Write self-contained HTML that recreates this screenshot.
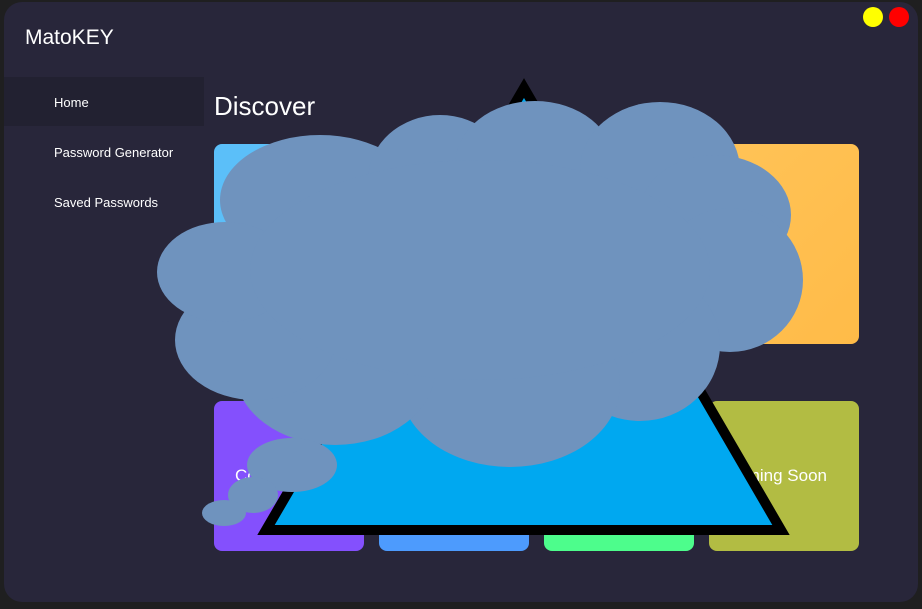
<!DOCTYPE html>
<html><head><meta charset="utf-8"><style>
*{margin:0;padding:0;box-sizing:border-box}
body{width:922px;height:609px;background:#1f1f20;position:relative;overflow:hidden;font-family:"Segoe UI","Liberation Sans",sans-serif;color:#fff}
.app{position:absolute;left:4px;top:2px;width:914px;height:600px;background:#28263a;border-radius:18px}
.t{position:absolute;white-space:nowrap}
.card{position:absolute;width:150px;border-radius:8px}
</style></head><body>
<div class="app"></div>
<div class="t" style="left:25px;top:26px;font-size:21px">MatoKEY</div>
<div style="position:absolute;left:4px;top:77px;width:200px;height:49px;background:#222131"></div>
<div class="t" style="left:54px;top:95px;font-size:13px">Home</div>
<div class="t" style="left:54px;top:145px;font-size:13px">Password Generator</div>
<div class="t" style="left:54px;top:195px;font-size:13px">Saved Passwords</div>
<div class="t" style="left:214px;top:91px;font-size:26px">Discover</div>
<div style="position:absolute;left:863px;top:7px;width:20px;height:20px;border-radius:50%;background:#ffff00"></div>
<div style="position:absolute;left:889px;top:7px;width:20px;height:20px;border-radius:50%;background:#ff0000"></div>
<div class="card" style="left:214px;top:144px;height:200px;background:#5bbff9"></div>
<div class="card" style="left:379px;top:144px;height:200px;background:#5bbff9"></div>
<div class="card" style="left:544px;top:144px;height:200px;background:#ffc050"></div>
<div class="card" style="left:709px;top:144px;height:200px;background:linear-gradient(135deg,#ffc357,#ffbb48)"></div>
<div class="card" style="left:214px;top:401px;height:150px;background:#8450fd"></div>
<div class="card" style="left:379px;top:401px;height:150px;background:#4d9bfd"></div>
<div class="card" style="left:544px;top:401px;height:150px;background:#4dfd8c"></div>
<div class="card" style="left:709px;top:401px;height:150px;background:#b2bc43"></div>
<div class="t" style="left:235px;top:466px;font-size:17px">Coming Soon</div>
<div class="t" style="left:724px;top:466px;font-size:17px">Coming Soon</div>
<svg style="position:absolute;left:0;top:0" width="922" height="609">
<polygon points="524,88 266,530 781,530" fill="#00a8f0" stroke="#000" stroke-width="10"/>
<g fill="#6f93be">
<ellipse cx="320" cy="200" rx="100" ry="65"/>
<ellipse cx="440" cy="180" rx="72" ry="65"/>
<ellipse cx="535" cy="165" rx="80" ry="64"/>
<ellipse cx="660" cy="170" rx="80" ry="68"/>
<ellipse cx="715" cy="215" rx="76" ry="60"/>
<ellipse cx="730" cy="280" rx="73" ry="72"/>
<ellipse cx="640" cy="345" rx="80" ry="76"/>
<ellipse cx="510" cy="385" rx="110" ry="82"/>
<ellipse cx="335" cy="370" rx="100" ry="75"/>
<ellipse cx="255" cy="340" rx="80" ry="60"/>
<ellipse cx="225" cy="272" rx="68" ry="50"/>
<ellipse cx="480" cy="270" rx="230" ry="110"/>
<ellipse cx="292" cy="465" rx="45" ry="27"/>
<ellipse cx="253" cy="495" rx="25" ry="18"/>
<ellipse cx="224" cy="513" rx="22" ry="13"/>
</g>
</svg>
</body></html>
